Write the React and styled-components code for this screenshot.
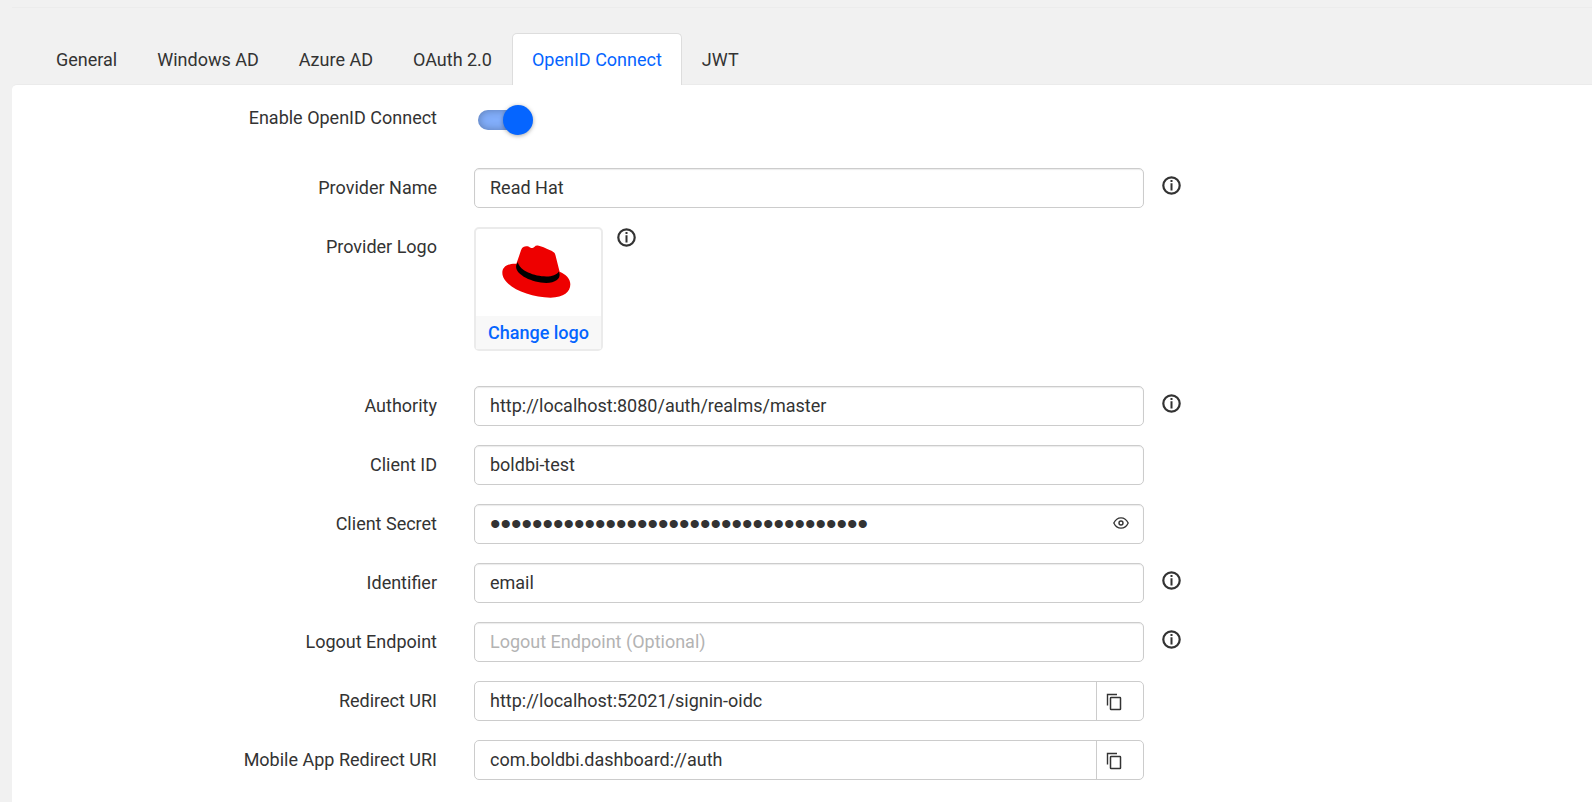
import React, { useState } from "react";
import styled, { createGlobalStyle, css } from "styled-components";

const GlobalStyle = createGlobalStyle`
  *, *::before, *::after { box-sizing: border-box; }
  body {
    margin: 0;
    background: #f1f1f1;
    color: #333;
    font-family: Roboto, "Liberation Sans", sans-serif;
    font-size: 18px;
  }
  input, button { font: inherit; color: inherit; }
`;

const Page = styled.main`
  display: flex;
  flex-direction: column;
  min-height: 100vh;
  padding: 7px 0 0 12px;
`;

const TabBar = styled.nav`
  display: flex;
  padding: 25px 0 0 24px;
  border-top: 1px solid #ececec;
`;

const Tab = styled.a`
  z-index: 1;
  height: 52px;
  margin-bottom: -1px;
  padding: 0 19px;
  border: 1px solid transparent;
  border-bottom: 0;
  border-radius: 5px 5px 0 0;
  line-height: 52px;
  color: inherit;
  text-decoration: none;
  white-space: nowrap;
  ${({ $active }) =>
    $active &&
    css`
      background: #fff;
      border-color: #ddd;
      color: #0565ff;
    `}
`;

const Panel = styled.form`
  flex: 1;
  display: flex;
  flex-direction: column;
  gap: 19px;
  padding: 20px 0 23px;
  background: #fff;
  border-top: 1px solid #ebebeb;
  border-radius: 5px 0 0 0;
`;

const Row = styled.div`
  display: grid;
  grid-template-columns: 462fr 670fr 448fr;
  align-items: start;
  min-height: ${({ $height }) => $height || 40}px;
`;

const Label = styled.label`
  padding-right: 37px;
  line-height: ${({ $compact }) => ($compact ? 26 : 40)}px;
  text-align: right;
`;

const Switch = styled.input`
  appearance: none;
  display: grid;
  align-items: center;
  width: 55px;
  height: 30px;
  margin: 0 0 0 4px;
  cursor: pointer;

  &::before,
  &::after {
    content: "";
    grid-area: 1 / 1;
  }
  &::before {
    width: 50px;
    height: 20px;
    border-radius: 10px;
    background: #bbb;
    box-shadow: inset 0 0 8px rgba(0, 0, 0, 0.3);
  }
  &::after {
    width: 30px;
    height: 30px;
    border-radius: 50%;
    background: #eee;
    box-shadow: 0 1px 4px rgba(0, 0, 0, 0.35);
  }
  &:checked::before { background: #82aefb; }
  &:checked::after {
    justify-self: end;
    background: #0565ff;
  }
`;

const Field = styled.div`
  display: flex;
  height: 40px;
  border: 1px solid #ccc;
  border-radius: 5px;
  background: #fff;
  box-shadow: ${({ $flat }) => ($flat ? "none" : "inset 0 1px 1px rgba(0, 0, 0, 0.08)")};
`;

const TextInput = styled.input`
  flex: 1;
  min-width: 0;
  padding: 0 15px 2px;
  border: 0;
  outline: 0;
  background: transparent;
  &::placeholder { color: #b3b3b3; }
  &[type="password"] {
    padding-bottom: 0;
    font-family: "Liberation Sans", sans-serif;
    font-size: 30px;
  }
`;

const IconButton = styled.button`
  display: flex;
  align-items: center;
  padding: 0;
  border: 0;
  background: none;
  cursor: pointer;
`;

const EyeButton = styled(IconButton)`
  padding: 0 14px 2px;
`;

const CopyButton = styled(IconButton)`
  width: 47px;
  padding: 2px 0 0 9px;
  border-left: 1px solid #ccc;
`;

const InfoButton = styled(IconButton)`
  margin: 8px 0 0 18px;
`;

const LogoArea = styled.div`
  display: flex;
  align-items: flex-start;
`;

const LogoInfoButton = styled(IconButton)`
  margin: 1px 0 0 14px;
`;

const LogoCard = styled.div`
  display: flex;
  flex-direction: column;
  width: 129px;
  height: 124px;
  border: 2px solid #ebebeb;
  border-radius: 5px;
`;

const LogoPreview = styled.div`
  flex: 1;
  display: flex;
  justify-content: center;
  padding: 16px 4px 0 0;
`;

const ChangeLogo = styled.button`
  height: 33px;
  padding: 0;
  border: 0;
  background: #f8f8f8;
  color: #0565ff;
  font-weight: 500;
  cursor: pointer;
`;

const InfoIcon = () => (
  <svg width="19" height="19" viewBox="0 0 19 19" aria-hidden="true">
    <circle cx="9.5" cy="9.5" r="8.2" fill="none" stroke="#333" strokeWidth="2.2" />
    <path d="M8.5 4h2v2H8.500zM8.500 7.200h2v7.300H8.500z" fill="#333" />
  </svg>
);

const EyeIcon = () => (
  <svg width="16" height="12" viewBox="0 0 16 12" fill="none" stroke="#333" aria-hidden="true">
    <path d="M.8 6C2.4 2.6 5 .8 8 .8S13.600 2.600 15.200 6C13.600 9.400 11 11.200 8 11.200S2.400 9.400.8 6Z" strokeWidth="1.3" />
    <circle cx="8" cy="6" r="2" strokeWidth="1.4" />
  </svg>
);

const CopyIcon = () => (
  <svg width="16" height="18" viewBox="0 0 16 18" fill="none" stroke="#333" aria-hidden="true">
    <path d="M1.500 12.500V1.500H11" strokeWidth="1.400" />
    <rect x="4.500" y="4.500" width="10" height="12" rx=".6" strokeWidth="1.500" />
  </svg>
);

const HatLogo = () => (
  <svg width="69" height="53" viewBox="128 104 206 158" role="img" aria-label="Provider logo">
    <path
      d="M171 160C142 159 129 170 129 187C129 226 205 261 273 261C313 261 332 243 332 221C332 205 318 191 300 184L288 136C286 126 281 124 270 119C260 114 244 107 235 105.500C226 104 225 112 219 113C211 114 211 107 200 107.500C190 108 186 115 184 122Z"
      fill="#e00"
    />
    <path
      d="M175 155C180 181 225 198 260 198C278 198 291 193 298 183L300 192C301 205 288 217 260 217C218 217 170 193 170 169C170 163 173 160 175 155Z"
      fill="#000"
    />
  </svg>
);

const tabs = ["General", "Windows AD", "Azure AD", "OAuth 2.0", "OpenID Connect", "JWT"];

const fields = [
  { id: "authority", label: "Authority", value: "http://localhost:8080/auth/realms/master", info: true },
  { id: "client-id", label: "Client ID", value: "boldbi-test" },
  { id: "client-secret", label: "Client Secret", value: "f3a1c9d07b5e4826a9c4d1e8b7f60352c8da", secret: true },
  { id: "identifier", label: "Identifier", value: "email", info: true },
  { id: "logout", label: "Logout Endpoint", value: "", placeholder: "Logout Endpoint (Optional)", info: true },
  { id: "redirect", label: "Redirect URI", value: "http://localhost:52021/signin-oidc", copy: true },
  { id: "mobile", label: "Mobile App Redirect URI", value: "com.boldbi.dashboard://auth", copy: true },
];

function FieldRow({ id, label, value, placeholder, info, secret, copy }) {
  const [shown, setShown] = useState(false);
  return (
    <Row>
      <Label htmlFor={id}>{label}</Label>
      <Field $flat={copy}>
        <TextInput
          id={id}
          type={secret && !shown ? "password" : "text"}
          defaultValue={value}
          placeholder={placeholder}
          readOnly={copy}
        />
        {secret && (
          <EyeButton type="button" aria-label="Show secret" onClick={() => setShown(!shown)}>
            <EyeIcon />
          </EyeButton>
        )}
        {copy && (
          <CopyButton type="button" aria-label={`Copy ${label}`} onClick={() => navigator.clipboard?.writeText(value)}>
            <CopyIcon />
          </CopyButton>
        )}
      </Field>
      {info && (
        <InfoButton type="button" aria-label={`About ${label}`}>
          <InfoIcon />
        </InfoButton>
      )}
    </Row>
  );
}

export default function App() {
  return (
    <>
      <GlobalStyle />
      <Page>
        <TabBar>
          {tabs.map((name) => (
            <Tab key={name} href="#" $active={name === "OpenID Connect"}>
              {name}
            </Tab>
          ))}
        </TabBar>
        <Panel>
          <Row $height={44}>
            <Label htmlFor="enable" $compact>Enable OpenID Connect</Label>
            <Switch id="enable" type="checkbox" role="switch" defaultChecked />
          </Row>
          <FieldRow id="provider-name" label="Provider Name" value="Read Hat" info />
          <Row $height={140}>
            <Label htmlFor="change-logo">Provider Logo</Label>
            <LogoArea>
              <LogoCard>
                <LogoPreview>
                  <HatLogo />
                </LogoPreview>
                <ChangeLogo id="change-logo" type="button">Change logo</ChangeLogo>
              </LogoCard>
              <LogoInfoButton type="button" aria-label="About Provider Logo">
                <InfoIcon />
              </LogoInfoButton>
            </LogoArea>
          </Row>
          {fields.map((field) => (
            <FieldRow key={field.id} {...field} />
          ))}
        </Panel>
      </Page>
    </>
  );
}
